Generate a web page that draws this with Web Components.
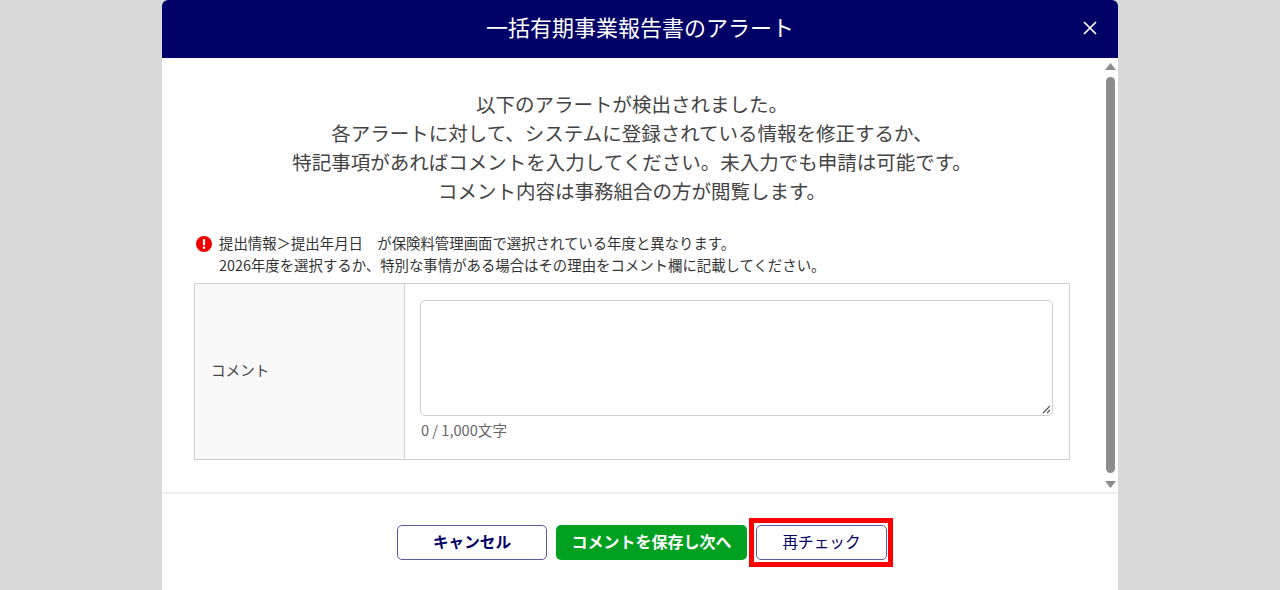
<!DOCTYPE html>
<html lang="ja">
<head>
<meta charset="utf-8">
<style>
  html, body { margin: 0; height: 100%; }
  body {
    background: #d9d9d9;
    font-family: "Noto Sans CJK JP", "Noto Sans", sans-serif;
    color: #333;
    overflow: hidden;
  }
</style>
</head>
<body>
<alert-dialog heading="一括有期事業報告書のアラート">
  <alert-intro>
    <div>以下のアラートが検出されました。</div>
    <div>各アラートに対して、システムに登録されている情報を修正するか、</div>
    <div>特記事項があればコメントを入力してください。未入力でも申請は可能です。</div>
    <div>コメント内容は事務組合の方が閲覧します。</div>
  </alert-intro>
  <alert-message>
    <div>提出情報＞提出年月日　が保険料管理画面で選択されている年度と異なります。</div>
    <div>2026年度を選択するか、特別な事情がある場合はその理由をコメント欄に記載してください。</div>
  </alert-message>
  <comment-table label="コメント" count="0 / 1,000文字"></comment-table>
  <action-button slot="footer" kind="outline" strong style="width:150px">キャンセル</action-button>
  <action-button slot="footer" kind="primary" strong style="width:191px;font-size:16px">コメントを保存し次へ</action-button>
  <action-button slot="footer" kind="outline" marked style="width:131px">再チェック</action-button>
</alert-dialog>

<script>
class AlertDialog extends HTMLElement {
  constructor() {
    super();
    this.attachShadow({ mode: 'open' });
    this.shadowRoot.innerHTML = `
      <style>
        :host { display: flex; flex-direction: column; width: 956px; height: 590px; margin: 0 auto; background: #fff; border-radius: 6px 6px 0 0; overflow: hidden; }
        header { flex: none; height: 58px; box-sizing: border-box; padding-bottom: 6px; background: #000066; color: #fff; display: flex; align-items: center; justify-content: center; font-size: 22px; position: relative; }
        header svg { position: absolute; right: 20px; top: 20px; }
        .middle { flex: none; height: 434px; display: flex; }
        .content { flex: 1; min-width: 0; padding: 30.5px 48px 0 32px; }
        .bar { flex: none; width: 18px; display: flex; flex-direction: column; align-items: center; padding: 5px 0 0 3px; box-sizing: border-box; }
        .thumb { width: 9px; height: 396px; margin: 7px 0 8px; border-radius: 5px; background: #8c8c8c; }
        footer { flex: 1; border-top: 2px solid #eeeeee; display: flex; justify-content: center; gap: 9px; padding: 31px 0 0 4px; }
      </style>
      <header><span></span>
        <svg width="16" height="16" viewBox="0 0 16 16"><path d="M2 2 L14 14 M14 2 L2 14" stroke="#fff" stroke-width="1.7" fill="none"/></svg>
      </header>
      <div class="middle">
        <div class="content"><slot></slot></div>
        <div class="bar">
          <svg width="11" height="7" viewBox="0 0 11 7"><path d="M5.5 0 L11 7 L0 7 Z" fill="#8c8c8c"/></svg>
          <div class="thumb"></div>
          <svg width="11" height="7" viewBox="0 0 11 7"><path d="M0 0 L11 0 L5.5 7 Z" fill="#8c8c8c"/></svg>
        </div>
      </div>
      <footer><slot name="footer"></slot></footer>`;
    this.shadowRoot.querySelector('header span').textContent = this.getAttribute('heading');
  }
}

class AlertIntro extends HTMLElement {
  constructor() {
    super();
    this.attachShadow({ mode: 'open' });
    this.shadowRoot.innerHTML = `
      <style>
        :host { display: block; padding-left: 18px; text-align: center; font-size: 19.5px; line-height: 29.3px; color: #444; white-space: nowrap; }
      </style>
      <slot></slot>`;
  }
}

class AlertMessage extends HTMLElement {
  constructor() {
    super();
    this.attachShadow({ mode: 'open' });
    this.shadowRoot.innerHTML = `
      <style>
        :host { display: flex; margin-top: 26.5px; padding-left: 2px; gap: 7px; font-size: 14.4px; line-height: 22px; color: #333; white-space: nowrap; }
        svg { flex: none; margin-top: 4px; }
      </style>
      <svg width="16" height="16" viewBox="0 0 16 16">
        <circle cx="8" cy="8" r="8" fill="#f00000"/>
        <rect x="6.9" y="3" width="2.2" height="6.6" rx="1" fill="#fff"/>
        <circle cx="8" cy="11.8" r="1.3" fill="#fff"/>
      </svg>
      <div><slot></slot></div>`;
  }
}

class CommentTable extends HTMLElement {
  constructor() {
    super();
    this.attachShadow({ mode: 'open' });
    this.shadowRoot.innerHTML = `
      <style>
        :host { display: grid; grid-template-columns: 210px 1fr; margin-top: 7px; width: 876px; height: 177px; box-sizing: border-box; border: 1px solid #cfcfcf; font-size: 14.6px; color: #444; }
        .label { background: #f9f9f9; border-right: 1px solid #cfcfcf; display: flex; align-items: center; padding: 0 0 4px 16px; }
        .field { padding: 16px 16px 0 15px; }
        .box { position: relative; height: 116px; box-sizing: border-box; border: 1px solid #cfcfcf; border-radius: 5px; }
        .box svg { position: absolute; right: 1px; bottom: 1px; }
        .count { margin-top: 4px; padding-left: 1px; font-size: 14.6px; line-height: 20px; color: #666; }
      </style>
      <div class="label"></div>
      <div class="field">
        <div class="box"><svg width="9" height="9" viewBox="0 0 9 9"><path d="M1 8 L8 1 M5 8 L8 5" stroke="#555" stroke-width="1.2" fill="none"/></svg></div>
        <div class="count"></div>
      </div>`;
    this.shadowRoot.querySelector('.label').textContent = this.getAttribute('label');
    this.shadowRoot.querySelector('.count').textContent = this.getAttribute('count');
  }
}

class ActionButton extends HTMLElement {
  constructor() {
    super();
    this.attachShadow({ mode: 'open' });
    this.shadowRoot.innerHTML = `
      <style>
        :host { display: flex; position: relative; height: 35px; box-sizing: border-box; padding-bottom: 4px; align-items: center; justify-content: center; border-radius: 5px; font-size: 15.6px; }
        :host([kind="outline"]) { background: #fff; border: 1px solid #5a5aa0; color: #000066; }
        :host([kind="primary"]) { background: #00a021; color: #fff; }
        :host([strong]) { font-weight: 700; }
        .mark { position: absolute; left: -8px; top: -8px; right: -7px; bottom: -8px; border: 5px solid #ff0000; }
      </style>
      <slot></slot>`;
    if (this.hasAttribute('marked')) {
      const mark = document.createElement('div');
      mark.className = 'mark';
      this.shadowRoot.appendChild(mark);
    }
  }
}

customElements.define('alert-dialog', AlertDialog);
customElements.define('alert-intro', AlertIntro);
customElements.define('alert-message', AlertMessage);
customElements.define('comment-table', CommentTable);
customElements.define('action-button', ActionButton);
</script>
</body>
</html>
